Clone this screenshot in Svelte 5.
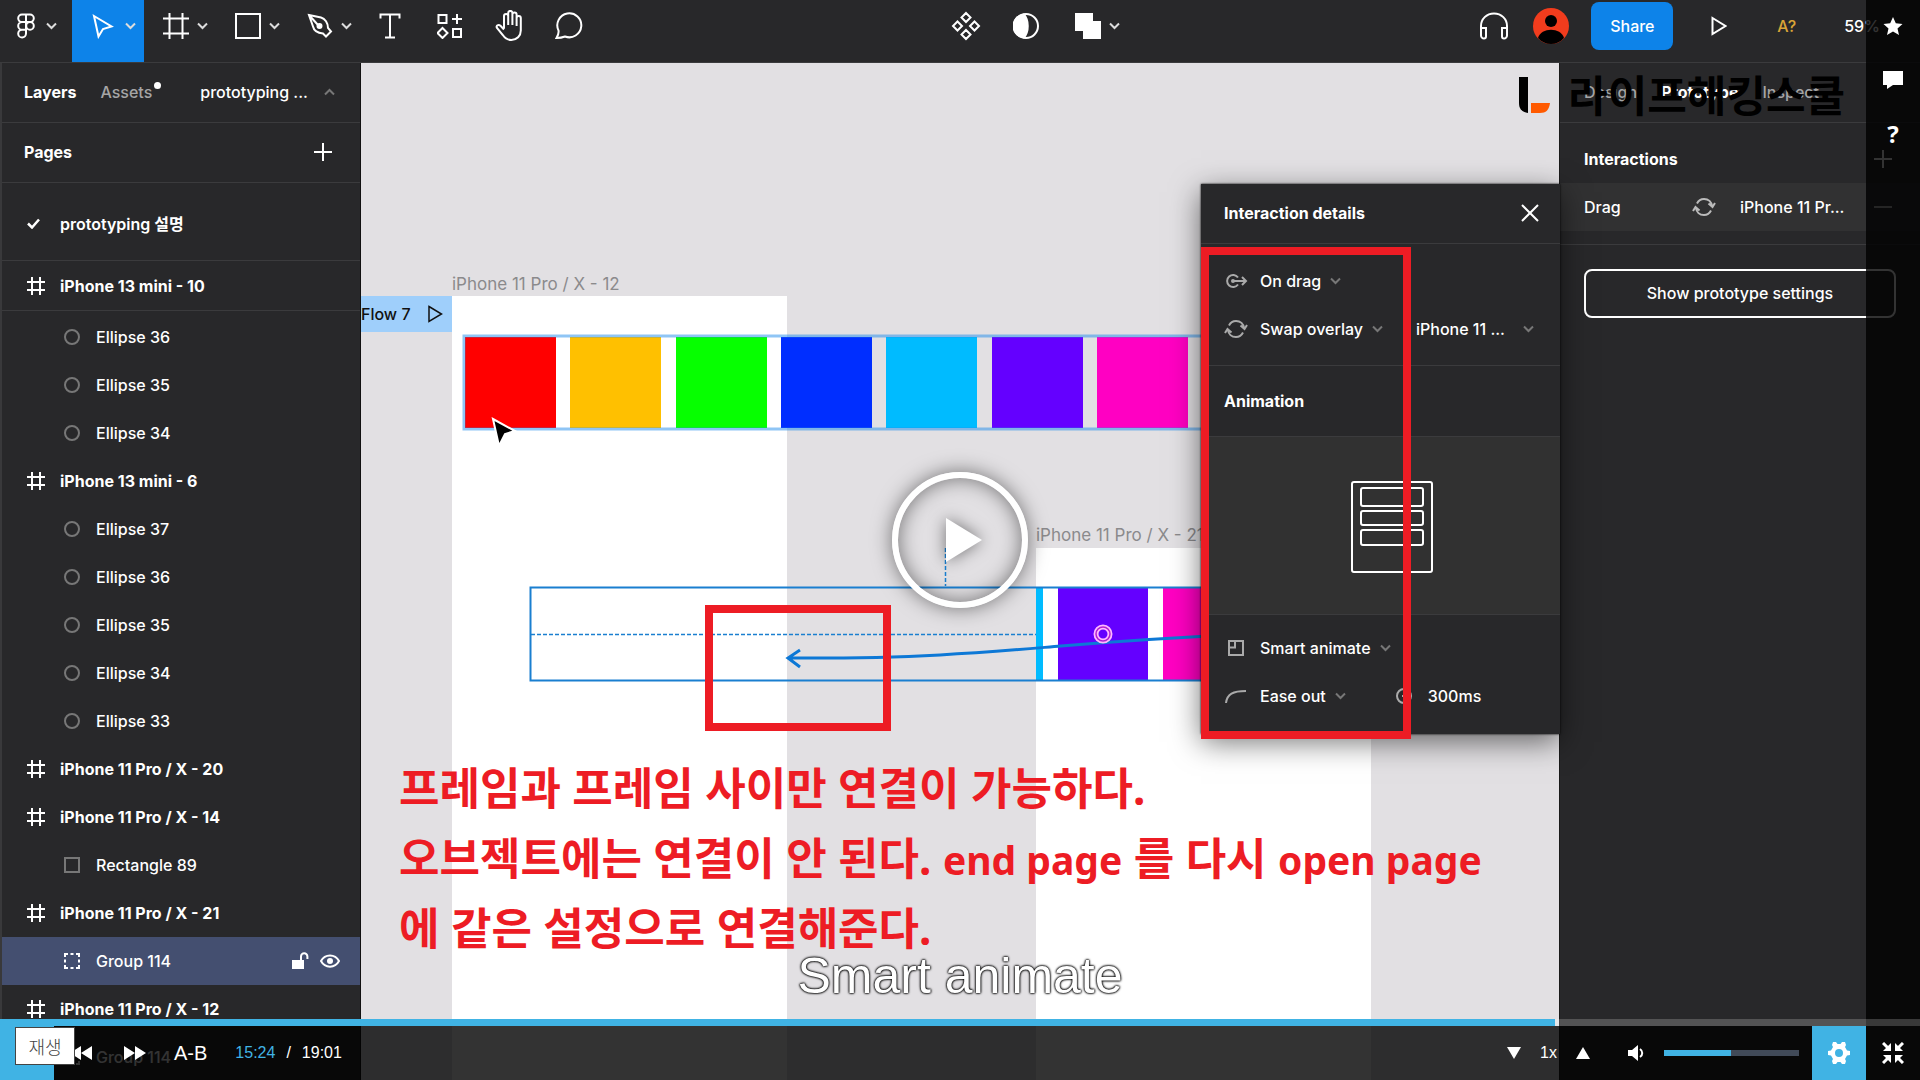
<script>
  const layers = [
    { type: 'ellipse', name: 'Ellipse 36' },
    { type: 'ellipse', name: 'Ellipse 35' },
    { type: 'ellipse', name: 'Ellipse 34' },
    { type: 'frame', name: 'iPhone 13 mini - 6' },
    { type: 'ellipse', name: 'Ellipse 37' },
    { type: 'ellipse', name: 'Ellipse 36' },
    { type: 'ellipse', name: 'Ellipse 35' },
    { type: 'ellipse', name: 'Ellipse 34' },
    { type: 'ellipse', name: 'Ellipse 33' },
    { type: 'frame', name: 'iPhone 11 Pro / X - 20' },
    { type: 'frame', name: 'iPhone 11 Pro / X - 14' },
    { type: 'rect', name: 'Rectangle 89' },
    { type: 'frame', name: 'iPhone 11 Pro / X - 21' },
    { type: 'group', name: 'Group 114', selected: true },
    { type: 'frame', name: 'iPhone 11 Pro / X - 12' },
    { type: 'group', name: 'Group 114' },
  ]

  const swatches = [
    { x: 104, color: '#ff0000' },
    { x: 209, color: '#ffc000' },
    { x: 315, color: '#06ff00' },
    { x: 420, color: '#002eff' },
    { x: 525, color: '#00bbff' },
    { x: 631, color: '#6400ff' },
    { x: 736, color: '#ff00c2' },
  ]

  const duration = 1141
  const position = 924
  let volume = 50

  const time = s => `${Math.floor(s / 60)}:${String(s % 60).padStart(2, '0')}`
</script>

{#snippet chevron()}
  <svg class="chevron" width="11" height="8" viewBox="0 0 11 8"><path d="M1 1.5l4.5 4.5L10 1.5" /></svg>
{/snippet}

{#snippet swap()}
  <svg class="line" width="24" height="20" viewBox="0 0 24 20">
    <path d="M5 6.5C6.500 3.500 9 2 12 2c4.500 0 7.500 3 8 7M16.500 6.500l4 3.500 2.500-4M19 13.500c-1.500 3-4 4.500-7 4.500-4.500 0-7.500-3-8-7M1 14l2.500-4 4 3.500" />
  </svg>
{/snippet}

{#snippet layerIcon(type)}
  {#if type === 'frame'}
    <svg class="line" width="18" height="18" viewBox="0 0 18 18"><path d="M5 0v18M13 0v18M0 5h18M0 13h18" /></svg>
  {:else if type === 'ellipse'}
    <svg class="line dim" width="16" height="16" viewBox="0 0 16 16"><circle cx="8" cy="8" r="7" /></svg>
  {:else if type === 'rect'}
    <svg class="line dim" width="16" height="16" viewBox="0 0 16 16"><rect x="1" y="1" width="14" height="14" /></svg>
  {:else}
    <svg class="line" width="16" height="16" viewBox="0 0 16 16">
      <path d="M1 4V1h3M12 1h3v3M15 12v3h-3M4 15H1v-3M6.500 1h3M6.500 15h3M1 6.500v3M15 6.500v3" />
    </svg>
  {/if}
{/snippet}

<main class="screen">
  <header class="toolbar">
    <nav class="tools">
      <button class="tool menu logo" aria-label="Main menu">
        <svg class="line" width="24" height="26" viewBox="0 0 24 26">
          <path d="M12 1.500H8a3.800 3.800 0 0 0 0 7.600h8a3.800 3.800 0 0 0 0-7.600h-4zM12 9.100H8a3.800 3.800 0 0 0 0 7.600h4M12 16.700H8a3.900 3.900 0 1 0 4 3.900V1.500" />
          <circle cx="16" cy="12.900" r="3.800" />
        </svg>
        {@render chevron()}
      </button>
      <button class="tool menu active" aria-label="Move">
        <svg class="line" width="24" height="26" viewBox="0 0 24 26"><path d="M3 3l17.500 10.500-8.500 2.500-4.500 7.500z" /></svg>
        {@render chevron()}
      </button>
      <button class="tool menu" aria-label="Frame">
        <svg class="line" width="26" height="26" viewBox="0 0 26 26"><path d="M6.500 0v26M19.500 0v26M0 5.500h26M0 20.500h26" /></svg>
        {@render chevron()}
      </button>
      <button class="tool menu" aria-label="Rectangle">
        <svg class="line" width="26" height="26" viewBox="0 0 26 26"><rect x="1" y="1" width="24" height="24" /></svg>
        {@render chevron()}
      </button>
      <button class="tool menu" aria-label="Pen">
        <svg class="line" width="26" height="26" viewBox="0 0 26 26">
          <path d="M2 2l12 2.500c4 1 7 5.500 7 10.500l3 3.500-5 5-3-3c-5.500-.5-9-2.500-10-7zM2 2l9 10" />
          <circle cx="12.500" cy="13" r="2" fill="#fff" />
        </svg>
        {@render chevron()}
      </button>
      <button class="tool" aria-label="Text">
        <svg class="line" width="22" height="26" viewBox="0 0 22 26"><path d="M1.500 5.500V1.500h19v4M11 1.500v23M6 24.500h10" /></svg>
      </button>
      <button class="tool" aria-label="Resources">
        <svg class="line" width="26" height="26" viewBox="0 0 26 26">
          <rect x="1.500" y="2" width="8" height="8" /><rect x="16" y="16" width="8" height="8" />
          <path d="M20 1v10M15 6h10M5.500 15l5 5-5 5-5-5z" />
        </svg>
      </button>
      <button class="tool" aria-label="Hand">
        <svg class="line" width="30" height="32" viewBox="0 0 30 32">
          <path d="M9 18.500V6a2 2 0 0 1 4.200 0v9V3a2 2 0 0 1 4.200 0v12V4.500a2 2 0 0 1 4.200 0V16V8a2 2 0 0 1 4.200 0v12.500c0 5.500-4 9.500-9.500 9.500-4 0-6.500-2-8.500-5L2 18c-1.500-2.500 1.500-4 3.500-2.200L9 19.500" />
        </svg>
      </button>
      <button class="tool" aria-label="Comment">
        <svg class="line" width="30" height="28" viewBox="0 0 30 28">
          <path d="M3.500 18.500A12 12 0 1 1 10 24.500c-2.500 1-5 1.500-8.500 1.500 1.500-2.500 2.500-4.500 2-7.500z" />
        </svg>
      </button>
    </nav>

    <div class="tools center">
      <button class="tool" aria-label="Component">
        <svg class="line" width="30" height="30" viewBox="0 0 30 30">
          <path d="M15 2l4.500 4.500L15 11l-4.500-4.500zM15 19l4.500 4.500L15 28l-4.500-4.500zM6.500 10.500L11 15l-4.500 4.500L2 15zM23.500 10.500L28 15l-4.500 4.500L19 15z" />
        </svg>
      </button>
      <button class="tool" aria-label="Mask">
        <svg class="line" width="26" height="26" viewBox="0 0 26 26">
          <circle cx="13" cy="13" r="12" /><path d="M11 1.500c5 6 5 17 0 23C-3 23-3 3 11 1.500z" fill="#fff" />
        </svg>
      </button>
      <button class="tool menu" aria-label="Union selection">
        <svg width="26" height="26" viewBox="0 0 26 26"><path d="M0 0h18v8h8v18H8v-8H0z" fill="#fff" /></svg>
        {@render chevron()}
      </button>
    </div>

    <div class="account">
      <button class="plain" aria-label="Audio">
        <svg class="line" width="30" height="28" viewBox="0 0 30 28">
          <path d="M2 22V14C2 7 7.500 1.500 15 1.500S28 7 28 14v8M2 16h5v8.500a2 2 0 0 1-2 2 3 3 0 0 1-3-3zM28 16h-5v8.500a2 2 0 0 0 2 2 3 3 0 0 0 3-3z" />
        </svg>
      </button>
      <svg class="avatar" width="36" height="36" viewBox="0 0 36 36">
        <circle cx="18" cy="18" r="18" fill="#f23c1d" />
        <circle cx="18" cy="13" r="6" /><path d="M5 30C8 19 28 19 31 30c-7 8-19 8-26 0z" />
      </svg>
      <button class="share">Share</button>
      <button class="plain present" aria-label="Present">
        <svg class="line" width="16" height="20" viewBox="0 0 16 20"><path d="M1.500 2l13 8-13 8z" /></svg>
      </button>
      <span class="missing">A?</span>
      <span class="zoom">59%</span>
    </div>
  </header>

  <div class="workspace">
    <aside class="left">
      <div class="tabs">
        <b>Layers</b>
        <span class="assets">Assets<i></i></span>
        <span class="page-name">prototyping ...</span>
        <svg class="chevron up dim" width="11" height="8" viewBox="0 0 11 8"><path d="M1 6.500L5.500 2 10 6.500" /></svg>
      </div>
      <div class="pages">
        <b>Pages</b>
        <button class="plain" aria-label="Add page">
          <svg class="line" width="18" height="18" viewBox="0 0 18 18"><path d="M9 0v18M0 9h18" /></svg>
        </button>
      </div>
      <div class="page">
        <svg width="13" height="11" viewBox="0 0 13 11"><path d="M1 5.500l4 4L12 1.500" fill="none" stroke="#fff" stroke-width="2.500" /></svg>
        prototyping 설명
      </div>
      <div class="layer frame pinned">{@render layerIcon('frame')}<span>iPhone 13 mini - 10</span></div>
      <ul>
        {#each layers as layer}
          <li class="layer {layer.type}" class:selected={layer.selected}>
            {@render layerIcon(layer.type)}
            <span>{layer.name}</span>
            {#if layer.selected}
              <svg width="17" height="18" viewBox="0 0 17 18">
                <rect y="8" width="12" height="9" fill="#fff" /><path d="M9 8V4.500a3.200 3.200 0 0 1 6.400 0V7" fill="none" stroke="#fff" stroke-width="2" />
              </svg>
              <svg width="20" height="14" viewBox="0 0 20 14">
                <path d="M1 7c4-7.500 14-7.500 18 0-4 7.500-14 7.500-18 0z" fill="none" stroke="#fff" stroke-width="2" /><circle cx="10" cy="7" r="3" fill="#fff" />
              </svg>
            {/if}
          </li>
        {/each}
      </ul>
    </aside>

    <section class="canvas">
      <div class="artboard first"></div>
      <div class="artboard second"></div>
      <span class="label first">iPhone 11 Pro / X - 12</span>
      <span class="label second">iPhone 11 Pro / X - 21</span>
      <div class="flow">
        Flow 7
        <svg width="15" height="18" viewBox="0 0 15 18"><path d="M1 1.500l12.500 7.500L1 16.500z" fill="none" stroke="#111" stroke-width="1.500" /></svg>
      </div>
      <svg class="drawing" width="100%" height="100%">
        {#each swatches as swatch}
          <rect x={swatch.x} y="274" width="91" height="91" fill={swatch.color} />
        {/each}
        <rect x="103" y="273" width="790" height="93" fill="none" stroke="#1f8ceb" stroke-opacity=".5" stroke-width="3" />

        <rect x="675" y="525" width="7" height="92" fill="#00bbff" />
        <rect x="697" y="525" width="90" height="92" fill="#6400ff" />
        <rect x="802" y="525" width="90" height="92" fill="#ff00c2" />
        <g fill="none" stroke="#1a7fd0">
          <rect x="169.500" y="524.500" width="720" height="93" stroke-width="2" />
          <path d="M170 571.500h505M584.500 485v38" stroke-dasharray="4 2" stroke-width="1.500" />
          <path d="M427 595C560 596 640 588 700 583S800 575 890 571M439 587l-12 8 12 9" stroke="#0d78d6" stroke-width="3" />
        </g>
        <circle cx="742" cy="571" r="7" fill="none" stroke="#ffb8ff" stroke-width="5" />
        <circle cx="742" cy="571" r="7" fill="none" stroke="#b020d0" stroke-width="1.500" />
        <path d="M132 356l22 12-10 3-6 12z" fill="#000" stroke="#fff" stroke-width="2" />
      </svg>

      <div class="details">
        <header>
          <b>Interaction details</b>
          <button class="plain" aria-label="Close">
            <svg class="line" width="18" height="18" viewBox="0 0 18 18"><path d="M1 1l16 16M17 1L1 17" /></svg>
          </button>
        </header>
        <div class="trigger">
          <div class="option">
            <svg class="line soft" width="24" height="16" viewBox="0 0 24 16">
              <path d="M14 11.500a6 6 0 1 1 0-7M8 8h14M18 4l4 4-4 4" /><circle cx="9" cy="8" r="2" fill="#aaa" stroke="none" />
            </svg>
            <button class="pick">On drag {@render chevron()}</button>
          </div>
          <div class="option">
            {@render swap()}
            <button class="pick">Swap overlay {@render chevron()}</button>
            <button class="pick target">iPhone 11 ... {@render chevron()}</button>
          </div>
        </div>
        <div class="heading"><b>Animation</b></div>
        <div class="preview">
          <svg class="line" width="82" height="92" viewBox="0 0 82 92">
            <rect x="1" y="1" width="80" height="90" rx="2" /><rect x="10" y="7" width="62" height="18" rx="2" />
            <rect x="10" y="30" width="62" height="14" rx="2" /><rect x="10" y="49" width="62" height="15" rx="2" />
          </svg>
        </div>
        <div class="motion">
          <div class="option">
            <svg class="line soft" width="24" height="18" viewBox="0 0 24 18"><rect x="5" y="2" width="14" height="14" /><path d="M5 8.500h6V2" /></svg>
            <button class="pick">Smart animate {@render chevron()}</button>
          </div>
          <div class="option">
            <svg class="line soft" width="24" height="16" viewBox="0 0 24 16"><path d="M2 15C3 6 9 3 22 3" /></svg>
            <button class="pick">Ease out {@render chevron()}</button>
            <span class="delay">
              <svg class="line soft" width="16" height="16" viewBox="0 0 16 16"><circle cx="8" cy="8" r="7" /><path d="M6 8h5" /></svg>
              300ms
            </span>
          </div>
        </div>
      </div>
    </section>

    <aside class="right">
      <div class="tabs"><span>Design</span><b>Prototype</b><span>Inspect</span></div>
      <div class="interactions">
        <div class="title">
          <b>Interactions</b>
          <button class="plain" aria-label="Add interaction">
            <svg class="line" width="18" height="18" viewBox="0 0 18 18"><path d="M9 0v18M0 9h18" /></svg>
          </button>
        </div>
        <div class="interaction">
          <span class="kind">Drag</span>
          {@render swap()}
          <span class="dest">iPhone 11 Pr...</span>
          <button class="plain" aria-label="Remove interaction">
            <svg class="line" width="18" height="18" viewBox="0 0 18 18"><path d="M0 9h18" /></svg>
          </button>
        </div>
      </div>
      <button class="settings">Show prototype settings</button>
    </aside>
  </div>

  <!-- lecture notes and player, drawn over the recording -->
  <div class="watermark">
    <svg width="31" height="36" viewBox="0 0 31 36">
      <path d="M0 0h9v36C3 35 0 32 0 26z" /><path d="M12 26h19c-1 7-4 10-10 10h-9z" fill="#ff5a00" />
    </svg>
    <span>라이프해킹스쿨</span>
  </div>
  <div class="mark arrow-end"></div>
  <div class="mark settings-area"></div>
  <p class="note">
    프레임과 프레임 사이만 연결이 가능하다.<br />
    오브젝트에는 연결이 안 된다. <span>end page</span> 를 다시 <span>open page</span><br />
    에 같은 설정으로 연결해준다.
  </p>
  <p class="caption">Smart animate</p>
  <button class="big-play" aria-label="재생">
    <svg width="36" height="44" viewBox="0 0 36 44"><path d="M0 0l36 22L0 44z" fill="#fff" /></svg>
  </button>

  <div class="rail">
    <button class="plain" aria-label="Bookmark">
      <svg width="20" height="18" viewBox="0 0 20 18"><path d="M10 0l2.800 6.200 6.700.7-5 4.500L16 18l-6-3.500L4 18l1.500-6.600-5-4.500 6.700-.7z" fill="#fff" /></svg>
    </button>
    <button class="plain" aria-label="Comments">
      <svg width="20" height="18" viewBox="0 0 20 18"><path d="M0 0h20v14H10l-6 4v-4H0z" fill="#fff" /></svg>
    </button>
    <button class="plain help" aria-label="Help">?</button>
  </div>

  <footer class="player">
    <div class="progress"><div style="width: {position / duration * 100}%"></div></div>
    <div class="controls">
      <button class="play" aria-label="재생"></button>
      <button class="plain rewind" aria-label="Rewind">
        <svg width="22" height="14" viewBox="0 0 22 14"><path d="M22 0v14L11 7v7L0 7l11-7v7z" fill="#fff" /></svg>
      </button>
      <button class="plain forward" aria-label="Forward">
        <svg width="22" height="14" viewBox="0 0 22 14"><path d="M0 0v14l11-7v7l11-7L11 0v7z" fill="#fff" /></svg>
      </button>
      <button class="plain repeat">A-B</button>
      <div class="time"><span>{time(position)}</span><span>/</span><span>{time(duration)}</span></div>
      <div class="speed">
        <button class="plain" aria-label="Slower"><svg width="14" height="12" viewBox="0 0 14 12"><path d="M0 0h14L7 12z" fill="#fff" /></svg></button>
        <span>1x</span>
        <button class="plain" aria-label="Faster"><svg width="14" height="12" viewBox="0 0 14 12"><path d="M0 12h14L7 0z" fill="#fff" /></svg></button>
      </div>
      <button class="plain mute" aria-label="Mute">
        <svg width="16" height="16" viewBox="0 0 16 16">
          <path d="M0 5h4l6-5v16l-6-5H0z" fill="#fff" /><path d="M12 4c3 2 3 6 0 8" fill="none" stroke="#fff" stroke-width="2" />
        </svg>
      </button>
      <input
        type="range"
        min="0"
        max="100"
        aria-label="Volume"
        bind:value={volume}
        style="background: linear-gradient(to right, #40b3e4 {volume}%, #414a58 {volume}%)"
      />
      <button class="square blue" aria-label="Settings">
        <svg width="24" height="24" viewBox="0 0 24 24">
          <path fill-rule="evenodd" fill="#fff" d="M6 1h3l1.500 2h3L15 1h3l1 3-1 2 2 3.500 3 .5v4l-3 .5-2 3.500 1 2-1 3h-3l-1.500-2h-3L9 23H6l-1-3 1-2-2-3.500L1 14v-4l3-.5L6 6 5 4zM12 8a4 4 0 1 0 0 8 4 4 0 1 0 0-8z" />
        </svg>
      </button>
      <button class="square" aria-label="Exit full screen">
        <svg width="22" height="22" viewBox="0 0 22 22">
          <path d="M1 1l7 7M21 1l-7 7M1 21l7-7M21 21l-7-7" stroke="#fff" stroke-width="3" />
          <path d="M9 1v8H1zM13 1v8h8zM9 21v-8H1zM13 21v-8h8z" fill="#fff" />
        </svg>
      </button>
    </div>
    <div class="tooltip">재생</div>
  </footer>
</main>

<style>
:global(body) {
  background: #28282a;
}
.screen {
  position: relative;
  display: flex;
  flex-direction: column;
  height: 100vh;
  overflow: hidden;
  background: #28282a;
  color: #fff;
  font: 500 16px/24px Inter, "Noto Sans CJK KR", sans-serif;
}
button {
  border: 0;
  padding: 0;
  margin: 0;
  background: none;
  color: inherit;
  font: inherit;
}
b {
  font-weight: 700;
}
ul, p {
  margin: 0;
  padding: 0;
  list-style: none;
}
svg {
  flex: none;
  display: block;
}
.line {
  fill: none;
  stroke: #fff;
  stroke-width: 2;
}
.line.soft {
  stroke: #aaa;
}
.line.dim {
  stroke: #777;
}
.chevron {
  fill: none;
  stroke: #ddd;
  stroke-width: 2;
}
.chevron.dim {
  stroke: #777;
}

/* toolbar */
.toolbar {
  display: flex;
  justify-content: space-between;
  height: 62px;
  flex: none;
  border-bottom: 1px solid #3b3b3d;
}
.tools {
  display: flex;
}
.center {
  margin-right: 16px;
}
.tool {
  width: 60px;
  height: 62px;
  padding-bottom: 10px;
  display: flex;
  align-items: center;
  justify-content: center;
}
.tool.menu {
  width: 72px;
  justify-content: flex-start;
  gap: 8px;
  padding-left: 19px;
}
.tool.logo {
  padding-left: 14px;
}
.tool.active {
  gap: 10px;
  background: #0d83e9;
}
.account {
  display: flex;
  align-items: center;
  height: 52px;
  padding-right: 40px;
}
.avatar {
  margin: 0 22px 0 24px;
}
.share {
  width: 82px;
  height: 48px;
  border-radius: 8px;
  background: #0d83e9;
}
.present {
  margin: 0 50px 0 38px;
}
.missing {
  color: #d9a437;
  margin-right: 48px;
}

/* panels */
.workspace {
  flex: 1;
  min-height: 0;
  display: flex;
}
.left, .right {
  flex: none;
  width: 361px;
  box-sizing: border-box;
}
.left {
  border-left: 2px solid #39393b;
  border-right: 1px solid #111;
  overflow: hidden;
}
.tabs, .pages, .page {
  display: flex;
  align-items: center;
  box-sizing: border-box;
  height: 60px;
  border-bottom: 1px solid #3b3b3d;
}
.left .tabs, .pages {
  padding: 0 28px 2px 22px;
}
.assets {
  position: relative;
  margin: 0 48px 0 24px;
  color: #a5a5a6;
}
.assets i {
  position: absolute;
  right: -9px;
  top: 2px;
  width: 7px;
  height: 7px;
  border-radius: 50%;
  background: #fff;
}
.page-name {
  flex: 1;
}
.left .tabs .up {
  margin-right: -3px;
}
.pages {
  justify-content: space-between;
}
.page {
  height: 78px;
  gap: 20px;
  padding: 4px 0 0 25px;
  font-weight: 600;
}
.layer {
  display: flex;
  align-items: center;
  box-sizing: border-box;
  height: 48px;
  gap: 15px;
  padding: 0 20px 0 25px;
}
.layer span {
  flex: 1;
}
.layer.frame {
  font-weight: 700;
}
.layer.ellipse, .layer.rect, .layer.group {
  gap: 16px;
  padding-left: 62px;
}
.layer.group {
  gap: 11px;
}
.layer.group span {
  padding-left: 5px;
}
.layer.selected {
  background: #444f70;
}
.layer.pinned {
  height: 50px;
  border-bottom: 1px solid #3b3b3d;
  margin-bottom: 2px;
}

/* canvas */
.canvas {
  position: relative;
  z-index: 1;
  flex: 1;
  background: #e2e0e3;
}
.artboard {
  position: absolute;
  bottom: 0;
  width: 335px;
  background: #fff;
}
.artboard.first {
  left: 91px;
  top: 233px;
}
.artboard.second {
  left: 675px;
  top: 485px;
}
.label {
  position: absolute;
  color: #8b8a8c;
  font-weight: 400;
  font-size: 17px;
}
.label.first {
  left: 91px;
  top: 209px;
}
.label.second {
  left: 675px;
  top: 460px;
}
.flow {
  position: absolute;
  left: 0;
  top: 233px;
  width: 91px;
  height: 36px;
  box-sizing: border-box;
  padding-right: 9px;
  display: flex;
  align-items: center;
  justify-content: space-between;
  background: #9fcffb;
  color: #111;
}
.drawing {
  position: absolute;
  inset: 0;
}
.details {
  position: absolute;
  right: -1px;
  top: 121px;
  width: 359px;
  background: #28282a;
  box-shadow: 0 0 2px #000, 0 8px 28px rgba(0, 0, 0, .55);
}
.details header, .heading {
  display: flex;
  align-items: center;
  justify-content: space-between;
  box-sizing: border-box;
  height: 60px;
  padding: 0 21px 2px 23px;
  border-bottom: 1px solid #3b3b3d;
}
.trigger {
  padding: 13px 0 12px;
  border-bottom: 1px solid #3b3b3d;
}
.option {
  display: flex;
  align-items: center;
  height: 48px;
  padding-left: 23px;
}
.option > .line {
  stroke: #aaa;
  margin-right: 12px;
}
.pick {
  display: flex;
  align-items: center;
  gap: 9px;
}
.pick .chevron {
  stroke: #777;
}
.target {
  flex: 1;
  justify-content: space-between;
  padding: 0 26px 0 33px;
}
.details .heading {
  height: 71px;
  padding-top: 2px;
}
.preview {
  display: flex;
  justify-content: center;
  align-items: center;
  height: 174px;
  padding: 3px 0 0 22px;
  background: #313131;
  border-bottom: 1px solid #3b3b3d;
}
.motion {
  padding: 9px 0 14px;
}
.delay {
  display: flex;
  align-items: center;
  gap: 16px;
  margin-left: 50px;
}

.right {
  border-left: 1px solid #1a1a1a;
}
.right .tabs {
  padding: 0 0 2px 24px;
  gap: 24px;
}
.right .tabs span {
  color: #a5a5a6;
}
.interactions {
  padding-bottom: 13px;
  border-bottom: 1px solid #3b3b3d;
}
.title, .interaction {
  display: flex;
  align-items: center;
  height: 48px;
  padding: 0 28px 0 24px;
}
.title {
  justify-content: space-between;
  padding-top: 12px;
}
.interaction {
  background: #313132;
}
.interaction .line {
  stroke: #bbb;
}
.kind {
  width: 108px;
}
.dest {
  flex: 1;
  padding-left: 24px;
}
.settings {
  display: block;
  box-sizing: border-box;
  width: 312px;
  height: 49px;
  margin: 24px;
  padding-bottom: 2px;
  border: 2px solid #fff;
  border-radius: 8px;
}

/* notes over the recording */
.watermark, .mark, .note, .caption, .big-play, .rail, .player {
  position: absolute;
  z-index: 2;
}
.watermark {
  top: 63px;
  right: 75px;
  display: flex;
  align-items: center;
  gap: 18px;
  color: #000;
  font: 700 43px/60px "Noto Sans CJK KR", sans-serif;
}
.watermark span {
  padding-bottom: 4px;
}
.mark {
  box-sizing: border-box;
  border: 8px solid #ed1c24;
}
.arrow-end {
  left: 705px;
  top: 605px;
  width: 186px;
  height: 126px;
}
.settings-area {
  right: 509px;
  top: 247px;
  width: 210px;
  height: 492px;
}
.note {
  left: 399px;
  top: 753px;
  color: #ed1c24;
  font: 700 44px/70px "Noto Sans", "Noto Sans CJK KR", sans-serif;
  white-space: nowrap;
}
.note span {
  font-size: 39px;
  line-height: 48px;
}
.caption {
  left: 0;
  right: 0;
  bottom: 74px;
  text-align: center;
  font: 400 50px/60px "Liberation Sans", sans-serif;
  text-shadow: 0 0 2px #000, 0 0 2px #000, 0 0 3px #000;
}
.big-play {
  left: 50%;
  top: 50%;
  width: 136px;
  height: 136px;
  margin: -68px;
  padding-left: 8px;
  display: flex;
  align-items: center;
  justify-content: center;
  border: 6px solid #fff;
  border-radius: 50%;
  box-shadow: 0 0 20px rgba(0, 0, 0, .5), inset 0 0 20px rgba(0, 0, 0, .5);
}
.big-play svg {
  filter: drop-shadow(0 0 8px rgba(0, 0, 0, .5));
}
.rail {
  top: 0;
  right: 0;
  bottom: 54px;
  width: 54px;
  display: flex;
  flex-direction: column;
  align-items: center;
  gap: 36px;
  padding-top: 17px;
  box-sizing: border-box;
  background: rgba(0, 0, 0, .8);
}
.help {
  font: 700 24px/18px "Noto Sans", sans-serif;
}

/* player */
.player {
  left: 0;
  right: 0;
  bottom: 0;
  font: 400 16px/20px "Liberation Sans", sans-serif;
}
.progress {
  height: 7px;
  background: rgba(255, 255, 255, .2);
}
.progress div {
  height: 100%;
  background: #40b3e4;
}
.controls {
  display: flex;
  align-items: center;
  height: 54px;
  background: rgba(0, 0, 0, .8);
}
.play, .square {
  width: 54px;
  height: 54px;
  display: flex;
  align-items: center;
  justify-content: center;
}
.play, .blue {
  background: #40b3e4;
}
.rewind {
  margin: 0 32px 0 16px;
}
.repeat {
  margin: 0 28px;
  font-size: 20px;
}
.time {
  display: flex;
  gap: 11px;
}
.time span:first-child {
  color: #40b3e4;
}
.speed {
  display: flex;
  align-items: center;
  gap: 19px;
  margin: 0 38px 0 auto;
}
input {
  appearance: none;
  width: 135px;
  height: 6px;
  margin: 0 13px 0 20px;
}
input::-webkit-slider-thumb {
  appearance: none;
  width: 1px;
  height: 6px;
}
.tooltip {
  position: absolute;
  left: 15px;
  top: 8px;
  width: 58px;
  height: 36px;
  border: 1px solid #444;
  background: #fff;
  color: #444;
  text-align: center;
  font: 300 18px/36px "Noto Sans CJK KR", sans-serif;
}
</style>
